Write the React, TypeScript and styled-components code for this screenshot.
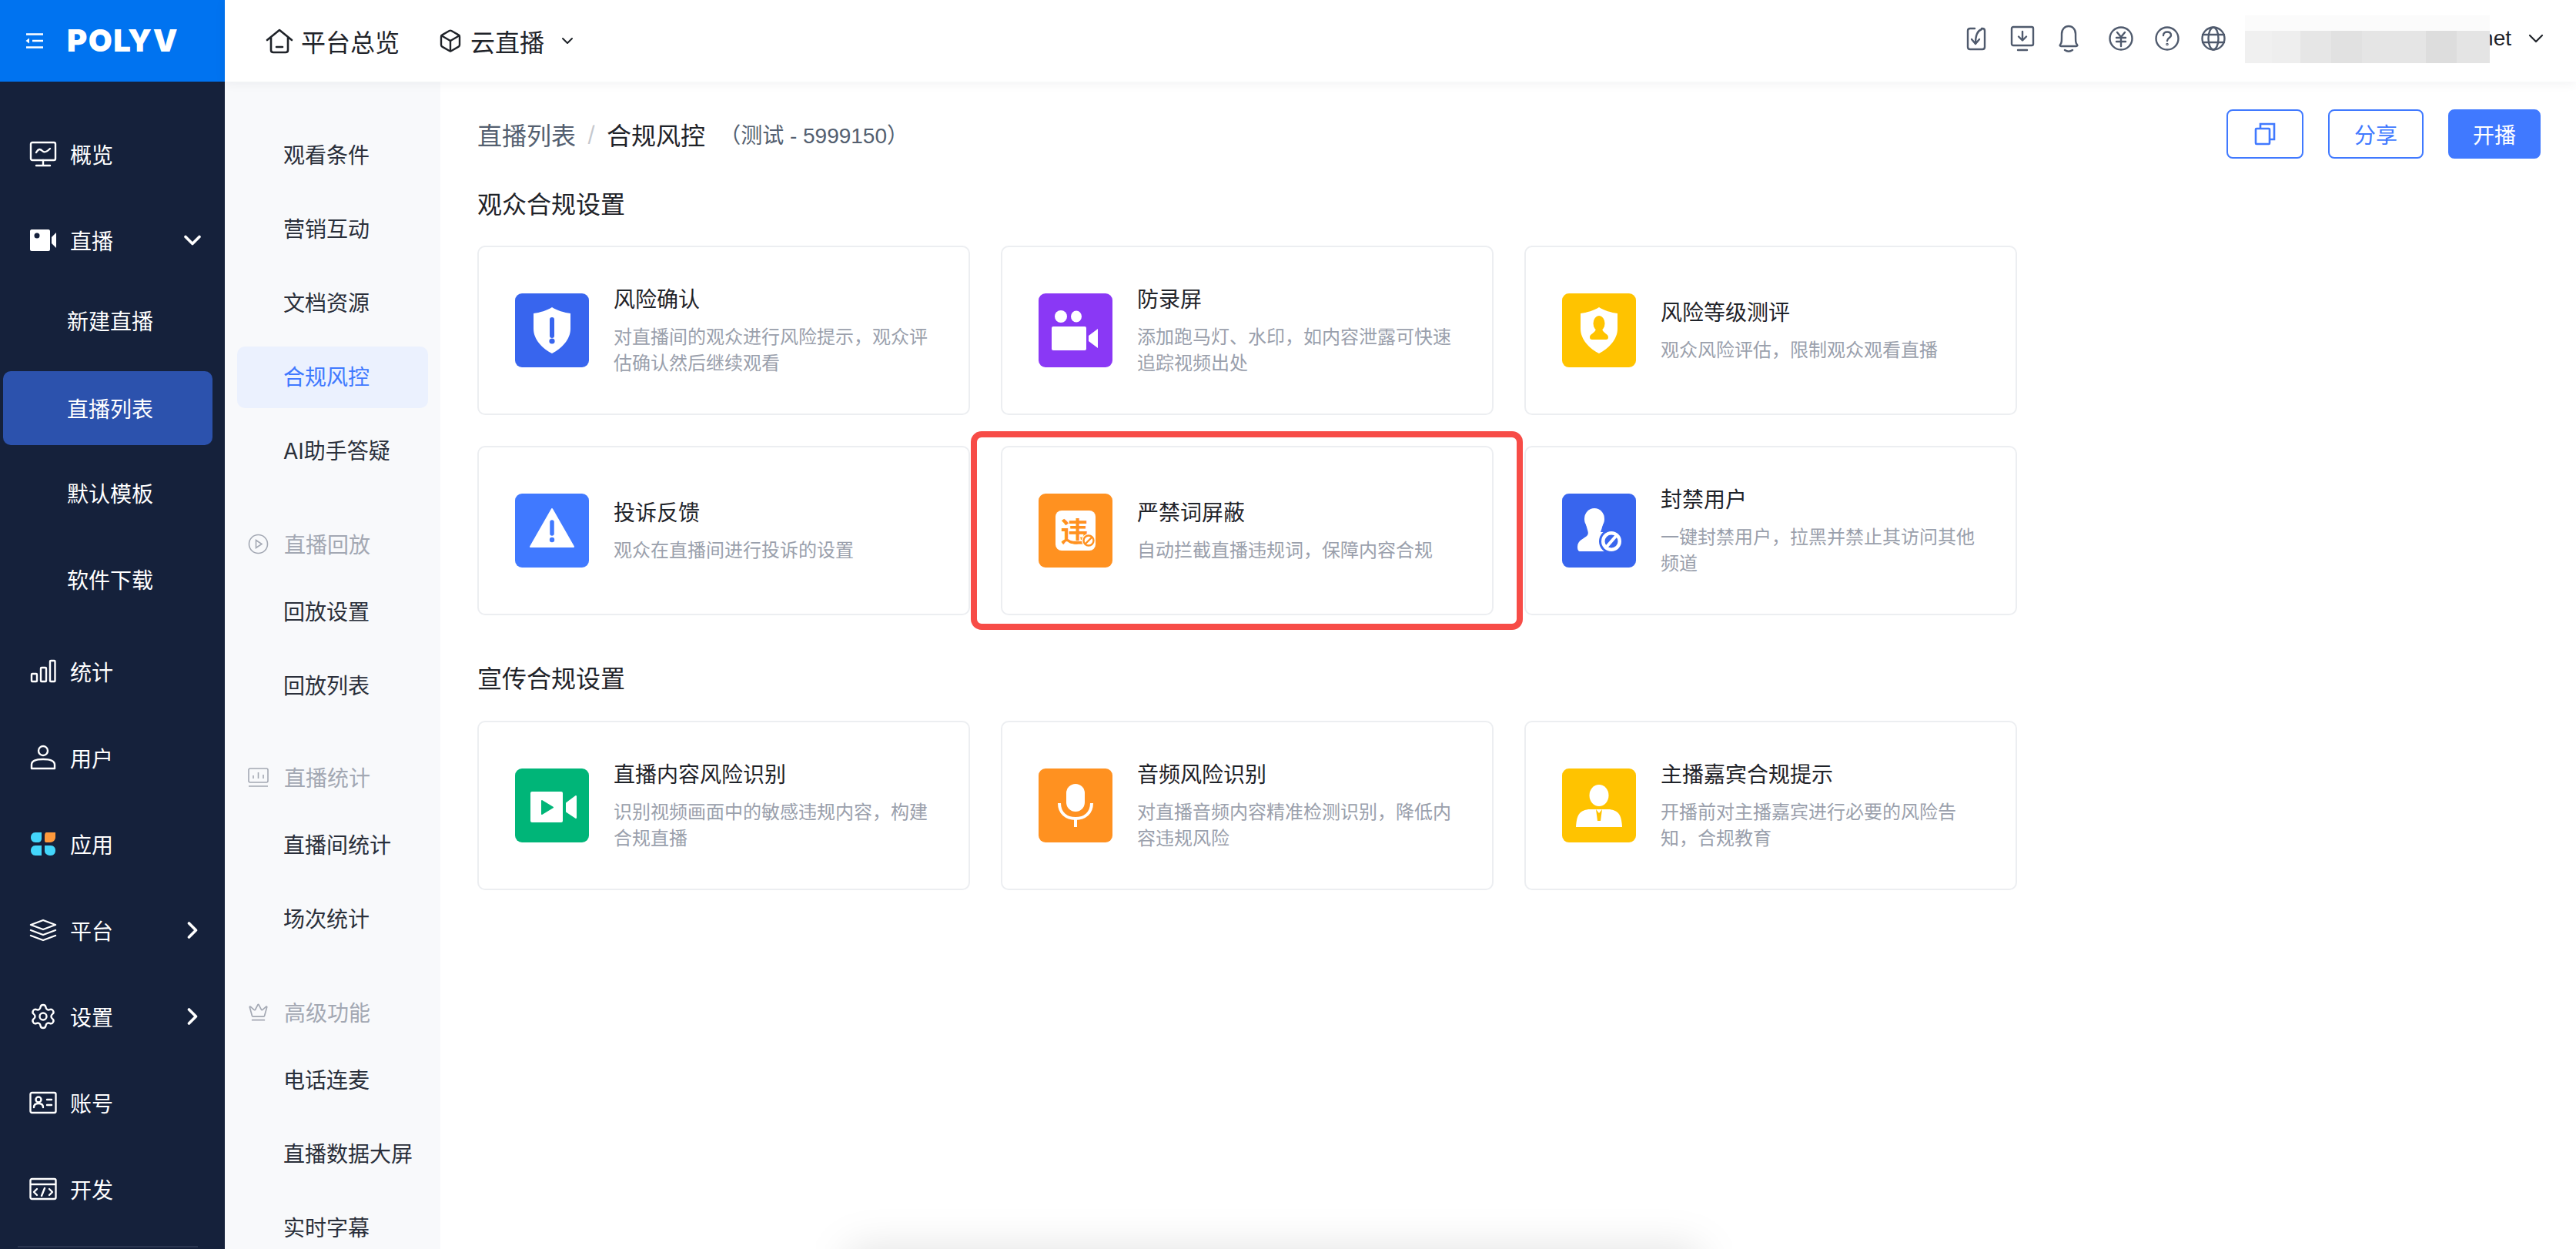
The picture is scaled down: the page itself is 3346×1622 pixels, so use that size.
import { ReactNode } from "react";
import styled, { createGlobalStyle } from "styled-components";
import { Box, ChevronDown, ChevronRight, Crown, Settings } from "lucide-react";

const GlobalStyle = createGlobalStyle`
  html, body {
    margin: 0;
    padding: 0;
    background: #fff;
    font-family: Inter, "Noto Sans CJK SC", sans-serif;
  }
  * {
    box-sizing: border-box;
  }
`;

const Page = styled.div`
  position: relative;
  display: flex;
  width: 3346px;
  height: 1622px;
  overflow: hidden;
  background: #fff;
`;

const Sidebar = styled.aside`
  flex: 0 0 292px;
  height: 100%;
  background: #15213b;
  color: #fff;
`;

const LogoBar = styled.div`
  display: flex;
  align-items: center;
  height: 106px;
  padding-left: 33px;
  background: #0073f0;
`;

const LogoText = styled.span`
  margin-left: 30px;
  font-family: Inter, sans-serif;
  font-size: 40px;
  font-weight: 900;
  letter-spacing: 1.5px;
  line-height: 1;
  color: #fff;
`;

const NavList = styled.nav`
  display: flex;
  flex-direction: column;
  padding-top: 38px;
`;

const NavItem = styled.div`
  display: flex;
  align-items: center;
  flex: 0 0 112px;
  padding-left: 38px;
  font-size: 28px;
  svg.lead {
    flex: 0 0 36px;
    margin-right: 17px;
  }
`;

const NavArrow = styled.span`
  display: flex;
  margin-left: auto;
  margin-right: 24px;
`;

const NavSub = styled.div<{ $active?: boolean }>`
  display: flex;
  align-items: center;
  flex: 0 0 96px;
  margin: ${(p) => (p.$active ? "2px 16px 14px 4px" : "0 16px 16px 4px")};
  padding-left: 83px;
  border-radius: 10px;
  font-size: 28px;
  background: ${(p) => (p.$active ? "#2c52ad" : "transparent")};
`;

const SideRule = styled.div`
  flex: 0 0 2px;
  margin: 18px 35px 0 23px;
  background: #2b3650;
`;

const Content = styled.div`
  flex: 1;
  display: flex;
  flex-direction: column;
  min-width: 0;
`;

const Header = styled.header`
  position: relative;
  z-index: 2;
  display: flex;
  align-items: center;
  flex: 0 0 106px;
  padding-left: 53px;
  padding-right: 36px;
  background: #fff;
  box-shadow: 0 2px 14px rgba(20, 30, 50, 0.06);
`;

const TopLink = styled.div`
  display: flex;
  align-items: center;
  gap: 10px;
  margin-right: 50px;
  font-size: 32px;
  color: #1f2329;
`;

const ToolIcons = styled.div`
  display: flex;
  align-items: center;
  gap: 28px;
  margin-left: auto;
  margin-top: -6px;
`;

const ToolIcon = styled.svg<{ $gapBefore?: boolean }>`
  width: 32px;
  height: 36px;
  margin-left: ${(p) => (p.$gapBefore ? "8px" : "0")};
  fill: none;
  stroke: #4f5a6d;
  stroke-width: 2.4;
  stroke-linecap: round;
  stroke-linejoin: round;
`;

const UserName = styled.div`
  position: relative;
  width: 346px;
  margin: -6px 16px 0 25px;
  font-family: "Liberation Sans", sans-serif;
  font-size: 28px;
  line-height: 40px;
  text-align: right;
  color: #1f2329;
`;

const UserCaret = styled.span`
  display: flex;
  margin-top: -6px;
`;

const BlurPatch = styled.div`
  position: absolute;
  left: 0;
  top: -10px;
  width: 318px;
  height: 62px;
  background:
    linear-gradient(#fbfbfb 0 20px, transparent 20px),
    linear-gradient(
      90deg,
      #f0f0f0 0 35px,
      #eeeeee 35px 72px,
      #e6e6e6 72px 112px,
      #e1e1e1 112px 152px,
      #e5e5e5 152px 235px,
      #dddddd 235px 275px,
      #e4e4e4 275px 318px
    );
`;

const Body = styled.div`
  flex: 1;
  display: flex;
  min-height: 0;
`;

const SubNav = styled.div`
  flex: 0 0 280px;
  padding-top: 46px;
  background: #f8f9fb;
`;

const SubItem = styled.div<{ $active?: boolean }>`
  display: flex;
  align-items: center;
  height: 96px;
  padding-left: 76px;
  font-size: 28px;
  color: ${(p) => (p.$active ? "#4079ff" : "#2a2f3a")};
  ${(p) =>
    p.$active &&
    `
    height: 80px;
    margin: 10px 16px 6px;
    padding-left: 60px;
    padding-bottom: 4px;
    border-radius: 10px;
    background: #ebf1fe;
  `}
`;

const SubGroup = styled.div<{ $top: number }>`
  display: flex;
  align-items: center;
  height: 78px;
  margin-top: ${(p) => p.$top}px;
  padding-left: 30px;
  font-size: 28px;
  color: #a3a8b3;
  svg {
    flex: 0 0 27px;
    margin-right: 20px;
  }
`;

const Main = styled.main`
  flex: 1;
  padding: 36px 46px 0 48px;
  min-width: 0;
`;

const TitleRow = styled.div`
  display: flex;
  align-items: center;
  height: 64px;
`;

const CrumbLink = styled.span`
  font-size: 32px;
  color: #545f70;
`;

const CrumbSep = styled.span`
  margin: 0 15px;
  font-size: 28px;
  color: #c5c8ce;
`;

const CrumbNow = styled.span`
  font-size: 32px;
  color: #1f2329;
`;

const CrumbNote = styled.span`
  margin-left: 18px;
  font-family: "Liberation Sans", "Noto Sans CJK SC", sans-serif;
  font-size: 28px;
  color: #545f70;
`;

const Actions = styled.div`
  display: flex;
  gap: 32px;
  margin-left: auto;
`;

const Button = styled.button<{ $primary?: boolean; $w: number }>`
  display: flex;
  align-items: center;
  justify-content: center;
  width: ${(p) => p.$w}px;
  height: 64px;
  padding: 0;
  border: 2px solid #4079ff;
  border-radius: 8px;
  font: inherit;
  font-size: 28px;
  color: ${(p) => (p.$primary ? "#fff" : "#4079ff")};
  background: ${(p) => (p.$primary ? "#4079ff" : "#fff")};
`;

const SectionTitle = styled.h2<{ $first?: boolean }>`
  margin: ${(p) => (p.$first ? "38px 0 31px" : "61px 0 32px")};
  font-size: 32px;
  font-weight: 400;
  line-height: 44px;
  color: #1f2329;
`;

const CardGrid = styled.div`
  display: grid;
  grid-template-columns: repeat(3, 640px);
  grid-auto-rows: 220px;
  gap: 40px;
`;

const Card = styled.div`
  display: flex;
  align-items: center;
  gap: 32px;
  padding-left: 47px;
  border: 2px solid #eceef1;
  border-radius: 10px;
  background: #fff;
`;

const IconTile = styled.div<{ $color: string }>`
  position: relative;
  display: flex;
  align-items: center;
  justify-content: center;
  flex: 0 0 96px;
  height: 96px;
  border-radius: 9px;
  background: ${(p) => p.$color};
  svg.art {
    display: block;
    width: 96px;
    height: 96px;
  }
`;

const WordTile = styled.div`
  position: relative;
  display: flex;
  align-items: center;
  justify-content: center;
  width: 52px;
  height: 52px;
  padding: 0 3px 2px 0;
  border-radius: 8px;
  font-size: 36px;
  font-weight: 700;
  line-height: 1;
  color: #ff9120;
  background: #fff;
  font-family: "Noto Sans CJK SC", sans-serif;
`;

const BanBadge = styled.svg`
  position: absolute;
  right: 0;
  bottom: 4px;
  width: 18px;
  height: 18px;
`;

const CardText = styled.div`
  width: 420px;
`;

const CardTitle = styled.div`
  font-size: 28px;
  line-height: 40px;
  color: #1f2329;
`;

const CardDesc = styled.div`
  margin-top: 12px;
  font-size: 24px;
  line-height: 34px;
  color: #9aa0ac;
`;

const RedMark = styled.div`
  position: absolute;
  left: 1261px;
  top: 560px;
  width: 717px;
  height: 258px;
  border: 8px solid #f74c47;
  border-radius: 14px;
  pointer-events: none;
`;

const FloatShadow = styled.div`
  position: absolute;
  left: 1100px;
  top: 1620px;
  width: 1110px;
  height: 60px;
  border-radius: 20px;
  background: rgba(0, 0, 0, 0.11);
  filter: blur(26px);
  pointer-events: none;
`;

const NavIcon = ({ children }: { children: ReactNode }) => (
  <svg
    className="lead"
    width="36"
    height="36"
    viewBox="0 0 36 36"
    fill="none"
    stroke="#fff"
    strokeWidth="2.4"
    strokeLinecap="round"
    strokeLinejoin="round"
  >
    {children}
  </svg>
);

const Art = ({ children }: { children: ReactNode }) => (
  <svg className="art" viewBox="0 0 96 96">
    {children}
  </svg>
);

const shield =
  "M48 18C54 22 64 25 72 26V46C72 60 60 72 48 78C36 72 24 60 24 46V26C32 25 42 22 48 18Z";

type CardData = {
  title: string;
  desc: string;
  color: string;
  art: ReactNode;
};

const audienceCards: CardData[] = [
  {
    title: "风险确认",
    desc: "对直播间的观众进行风险提示，观众评估确认然后继续观看",
    color: "#3865ee",
    art: (
      <Art>
        <path d={shield} fill="#fff" />
        <path d="M48 34V55" stroke="#3865ee" strokeWidth="6" strokeLinecap="round" />
        <circle cx="48" cy="62" r="3.6" fill="#3865ee" />
      </Art>
    ),
  },
  {
    title: "防录屏",
    desc: "添加跑马灯、水印，如内容泄露可快速追踪视频出处",
    color: "#8a38f5",
    art: (
      <Art>
        <ellipse cx="29" cy="30" rx="8" ry="8" fill="#fff" />
        <ellipse cx="49" cy="30" rx="7" ry="7.5" fill="#fff" />
        <rect x="17" y="43" width="45" height="31" rx="2" fill="#fff" />
        <path d="M65 55L77 46V71L65 62Z" fill="#fff" />
      </Art>
    ),
  },
  {
    title: "风险等级测评",
    desc: "观众风险评估，限制观众观看直播",
    color: "#ffc300",
    art: (
      <Art>
        <path d={shield} fill="#fff" />
        <ellipse cx="48" cy="39" rx="7.5" ry="10" fill="#ffc300" />
        <path d="M44 46H52C53 52 60 52 60 57C60 59 59 60 57 60H39C37 60 36 59 36 57C36 52 43 52 44 46Z" fill="#ffc300" />
      </Art>
    ),
  },
  {
    title: "投诉反馈",
    desc: "观众在直播间进行投诉的设置",
    color: "#4079ff",
    art: (
      <Art>
        <path d="M48 20L76 69H20Z" fill="#fff" stroke="#fff" strokeWidth="2" strokeLinejoin="round" />
        <path d="M48 37V52" stroke="#4079ff" strokeWidth="5.5" strokeLinecap="round" />
        <circle cx="48" cy="60" r="3.2" fill="#4079ff" />
      </Art>
    ),
  },
  {
    title: "严禁词屏蔽",
    desc: "自动拦截直播违规词，保障内容合规",
    color: "#ff9120",
    art: (
      <WordTile>
        违
        <BanBadge viewBox="0 0 18 18">
          <circle cx="9" cy="9" r="9" fill="#fff" />
          <circle cx="9" cy="9" r="6.5" fill="none" stroke="#ff9120" strokeWidth="2.4" />
          <path d="M5 13L13 5" stroke="#ff9120" strokeWidth="2.4" />
        </BanBadge>
      </WordTile>
    ),
  },
  {
    title: "封禁用户",
    desc: "一键封禁用户，拉黑并禁止其访问其他频道",
    color: "#3865ee",
    art: (
      <Art>
        <ellipse cx="42" cy="33" rx="13" ry="14" fill="#fff" />
        <path d="M31 40C33 48 35 51 33 54C30 58 20 60 20 69C20 73 21 75 24 75H64V50H50C51 47 52 44 53 40Z" fill="#fff" />
        <circle cx="64" cy="62" r="16" fill="#3865ee" />
        <circle cx="64" cy="62" r="13" fill="#fff" />
        <circle cx="64" cy="62" r="8.5" fill="#3865ee" />
        <path d="M57 70L71 54" stroke="#fff" strokeWidth="4" />
      </Art>
    ),
  },
];

const promoCards: CardData[] = [
  {
    title: "直播内容风险识别",
    desc: "识别视频画面中的敏感违规内容，构建合规直播",
    color: "#00b578",
    art: (
      <Art>
        <rect x="20" y="30" width="42" height="40" rx="2" fill="#fff" />
        <path d="M35 42L49 50.5L35 59Z" fill="#00b578" stroke="#00b578" strokeWidth="2" strokeLinejoin="round" />
        <path d="M67 45L79 36V64L67 56Z" fill="#fff" stroke="#fff" strokeWidth="2" strokeLinejoin="round" />
      </Art>
    ),
  },
  {
    title: "音频风险识别",
    desc: "对直播音频内容精准检测识别，降低内容违规风险",
    color: "#ff9120",
    art: (
      <Art>
        <rect x="36" y="20" width="24" height="36" rx="12" fill="#fff" />
        <path d="M27 45C27 58 36 65 48 65C60 65 69 58 69 45" fill="none" stroke="#fff" strokeWidth="4" />
        <path d="M48 65V76" stroke="#fff" strokeWidth="4" />
      </Art>
    ),
  },
  {
    title: "主播嘉宾合规提示",
    desc: "开播前对主播嘉宾进行必要的风险告知，合规教育",
    color: "#ffc300",
    art: (
      <Art>
        <ellipse cx="48" cy="35" rx="12.5" ry="14" fill="#fff" />
        <path d="M34 53H62C72 55 77 58 78 76H18C19 58 24 55 34 53Z" fill="#fff" />
        <path d="M44 53L48 58L52 53L50 68H46Z" fill="#ffc300" />
        <path d="M48 53V57" stroke="#fff" strokeWidth="2" />
      </Art>
    ),
  },
];

const FeatureCard = ({ title, desc, color, art }: CardData) => (
  <Card>
    <IconTile $color={color}>{art}</IconTile>
    <CardText>
      <CardTitle>{title}</CardTitle>
      <CardDesc>{desc}</CardDesc>
    </CardText>
  </Card>
);

const MenuFold = () => (
  <svg width="24" height="22" viewBox="0 0 24 22" fill="none" stroke="#fff" strokeWidth="2.6">
    <path d="M1 2.5H23M9 11H23M1 19.5H23" />
    <path d="M0.5 11L5 7.5V14.5Z" fill="#fff" stroke="none" />
  </svg>
);

const App = () => (
  <Page>
    <GlobalStyle />
    <Sidebar>
      <LogoBar>
        <MenuFold />
        <LogoText>POLYV</LogoText>
      </LogoBar>
      <NavList>
        <NavItem>
          <NavIcon>
            <rect x="2" y="3" width="32" height="23" rx="2" />
            <path d="M9 16C12 11 14 11 17 14C20 17 23 15 27 11M18 26V33M9 33H27" />
          </NavIcon>
          概览
        </NavItem>
        <NavItem>
          <NavIcon>
            <path
              d="M3 4H25C26 4 27 5 27 6V30C27 31 26 32 25 32H3C2 32 1 31 1 30V6C1 5 2 4 3 4Z"
              fill="#fff"
              stroke="none"
            />
            <circle cx="10" cy="12" r="3.5" fill="#15213b" stroke="none" />
            <path d="M29 14L35 8V28L29 22Z" fill="#fff" stroke="none" />
          </NavIcon>
          直播
          <NavArrow>
            <ChevronDown size={36} color="#fff" strokeWidth={2.4} />
          </NavArrow>
        </NavItem>
        <NavSub>新建直播</NavSub>
        <NavSub $active>直播列表</NavSub>
        <NavSub>默认模板</NavSub>
        <NavSub>软件下载</NavSub>
        <NavItem>
          <NavIcon>
            <rect x="3" y="21" width="7" height="10" rx="1" />
            <rect x="15" y="13" width="7" height="18" rx="1" />
            <rect x="27" y="4" width="6.5" height="27" rx="1" />
          </NavIcon>
          统计
        </NavItem>
        <NavItem>
          <NavIcon>
            <circle cx="18" cy="9" r="6" />
            <path d="M3 27C3 22 9 20 18 20C27 20 33 22 33 27V32H3Z" />
          </NavIcon>
          用户
        </NavItem>
        <NavItem>
          <svg className="lead" width="36" height="36" viewBox="0 0 36 36">
            <path d="M8 3H16V11C16 14 14 16 11 16H8C4 16 2 13 2 9.5C2 6 4 3 8 3Z" fill="#43d6fb" />
            <path d="M22 3H34V9C34 13 31 16 27 16H22C20 16 20 14 20 13V7C20 5 21 3 22 3Z" fill="#ff9a3c" />
            <path d="M8 20H16V33H8C4 33 2 30 2 26.5C2 23 4 20 8 20Z" fill="#43d6fb" />
            <path d="M20 20H28C32 20 34 23 34 26.5C34 30 32 33 28 33C24 33 20 31 20 27Z" fill="#43d6fb" />
          </svg>
          应用
        </NavItem>
        <NavItem>
          <NavIcon>
            <path d="M18 5L34 11L18 17L2 11Z" />
            <path d="M2 18L18 24L34 18M2 25L18 31L34 25" />
          </NavIcon>
          平台
          <NavArrow>
            <ChevronRight size={36} color="#fff" strokeWidth={2.4} />
          </NavArrow>
        </NavItem>
        <NavItem>
          <Settings className="lead" size={36} color="#fff" strokeWidth={1.6} />
          设置
          <NavArrow>
            <ChevronRight size={36} color="#fff" strokeWidth={2.4} />
          </NavArrow>
        </NavItem>
        <NavItem>
          <NavIcon>
            <rect x="1.5" y="5" width="33" height="26" rx="2" />
            <circle cx="12" cy="14" r="3.5" />
            <path d="M6 24C6 20 9 19 12 19C15 19 18 20 18 24M23 14H29M23 21H29" />
          </NavIcon>
          账号
        </NavItem>
        <NavItem>
          <NavIcon>
            <rect x="1.5" y="5" width="33" height="26" rx="2" />
            <path d="M2 12H34M10 18L6 22L10 26M26 18L30 22L26 26M20 17L16 27" />
          </NavIcon>
          开发
        </NavItem>
        <SideRule />
      </NavList>
    </Sidebar>
    <Content>
      <Header>
        <TopLink>
          <svg width="36" height="36" viewBox="0 0 36 36" fill="none" stroke="#1f2329" strokeWidth="2.6" strokeLinecap="round" strokeLinejoin="round">
            <path d="M2 17L18 4L34 17M7 14V30C7 32 8 33 10 33H26C28 33 29 32 29 30V14M14 26H22" />
          </svg>
          平台总览
        </TopLink>
        <TopLink>
          <Box size={32} color="#1f2329" strokeWidth={1.8} />
          云直播
          <ChevronDown size={24} color="#1f2329" strokeWidth={2} style={{ marginLeft: 8 }} />
        </TopLink>
        <ToolIcons>
          <ToolIcon viewBox="0 0 32 36">
            <path d="M14 5H8C6 5 5 6 5 8V29C5 31 6 32 8 32H24C26 32 27 31 27 29V8C27 6 26 5 24 5H23" />
            <path d="M23 6C17 8 15 14 15 24M10 19L15 25L20 19" />
          </ToolIcon>
          <ToolIcon viewBox="0 0 32 36">
            <rect x="2" y="3" width="28" height="24" rx="2" />
            <path d="M16 9V20M11 15.5L16 20.5L21 15.5M10 33H22" />
          </ToolIcon>
          <ToolIcon viewBox="0 0 32 36">
            <path d="M5 26C7 24 7 22 7 12C7 6 11 2 16 2C21 2 25 6 25 12C25 22 25 24 27 26C28 27 27 28 26 28H6C5 28 4 27 5 26Z" />
            <path d="M11 33C14 35 18 35 21 33" />
          </ToolIcon>
          <ToolIcon viewBox="0 0 32 36" $gapBefore>
            <circle cx="16" cy="18" r="14.5" />
            <path d="M11 10L16 16L21 10M10 17H22M10 22H22M16 16V28" />
          </ToolIcon>
          <ToolIcon viewBox="0 0 32 36">
            <circle cx="16" cy="18" r="14.5" />
            <path d="M11 14C11 11 13 9.5 16 9.5C19 9.5 21 11 21 14C21 17 16 17 16 21" />
            <circle cx="16" cy="25.5" r="0.6" />
          </ToolIcon>
          <ToolIcon viewBox="0 0 32 36">
            <circle cx="16" cy="18" r="14.5" />
            <ellipse cx="16" cy="18" rx="6.5" ry="14.5" />
            <path d="M2 13H30M2 23H30" />
          </ToolIcon>
        </ToolIcons>
        <UserName>
          net
          <BlurPatch />
        </UserName>
        <UserCaret>
          <ChevronDown size={32} color="#1f2329" strokeWidth={1.6} />
        </UserCaret>
      </Header>
      <Body>
        <SubNav>
          <SubItem>观看条件</SubItem>
          <SubItem>营销互动</SubItem>
          <SubItem>文档资源</SubItem>
          <SubItem $active>合规风控</SubItem>
          <SubItem>AI助手答疑</SubItem>
          <SubGroup $top={35}>
            <svg width="27" height="27" viewBox="0 0 27 27" fill="none" stroke="#a3a8b3" strokeWidth="1.6">
              <circle cx="13.5" cy="13.5" r="12" />
              <path d="M10.5 8.5L18 13.5L10.5 18.5Z" />
            </svg>
            直播回放
          </SubGroup>
          <SubItem>回放设置</SubItem>
          <SubItem>回放列表</SubItem>
          <SubGroup $top={33}>
            <svg width="27" height="27" viewBox="0 0 27 27" fill="none" stroke="#a3a8b3" strokeWidth="1.6">
              <rect x="1" y="2" width="25" height="18" rx="2" />
              <path d="M7 15V11M13.5 15V7M20 15V10M1 25H26" />
            </svg>
            直播统计
          </SubGroup>
          <SubItem>直播间统计</SubItem>
          <SubItem>场次统计</SubItem>
          <SubGroup $top={35}>
            <Crown size={27} color="#a3a8b3" strokeWidth={1.5} />
            高级功能
          </SubGroup>
          <SubItem>电话连麦</SubItem>
          <SubItem>直播数据大屏</SubItem>
          <SubItem>实时字幕</SubItem>
        </SubNav>
        <Main>
          <TitleRow>
            <CrumbLink>直播列表</CrumbLink>
            <CrumbSep>/</CrumbSep>
            <CrumbNow>合规风控</CrumbNow>
            <CrumbNote>（测试 - 5999150）</CrumbNote>
            <Actions>
              <Button $w={100}>
                <svg width="28" height="30" viewBox="0 0 28 30" fill="none" stroke="#4079ff" strokeWidth="2.6">
                  <rect x="2" y="8" width="18" height="20" rx="1" />
                  <path d="M8 8V2H26V22H20" />
                </svg>
              </Button>
              <Button $w={124}>分享</Button>
              <Button $w={120} $primary>
                开播
              </Button>
            </Actions>
          </TitleRow>
          <SectionTitle $first>观众合规设置</SectionTitle>
          <CardGrid>
            {audienceCards.map((card) => (
              <FeatureCard key={card.title} {...card} />
            ))}
          </CardGrid>
          <SectionTitle>宣传合规设置</SectionTitle>
          <CardGrid>
            {promoCards.map((card) => (
              <FeatureCard key={card.title} {...card} />
            ))}
          </CardGrid>
        </Main>
      </Body>
    </Content>
    <RedMark />
    <FloatShadow />
  </Page>
);

export default App;
